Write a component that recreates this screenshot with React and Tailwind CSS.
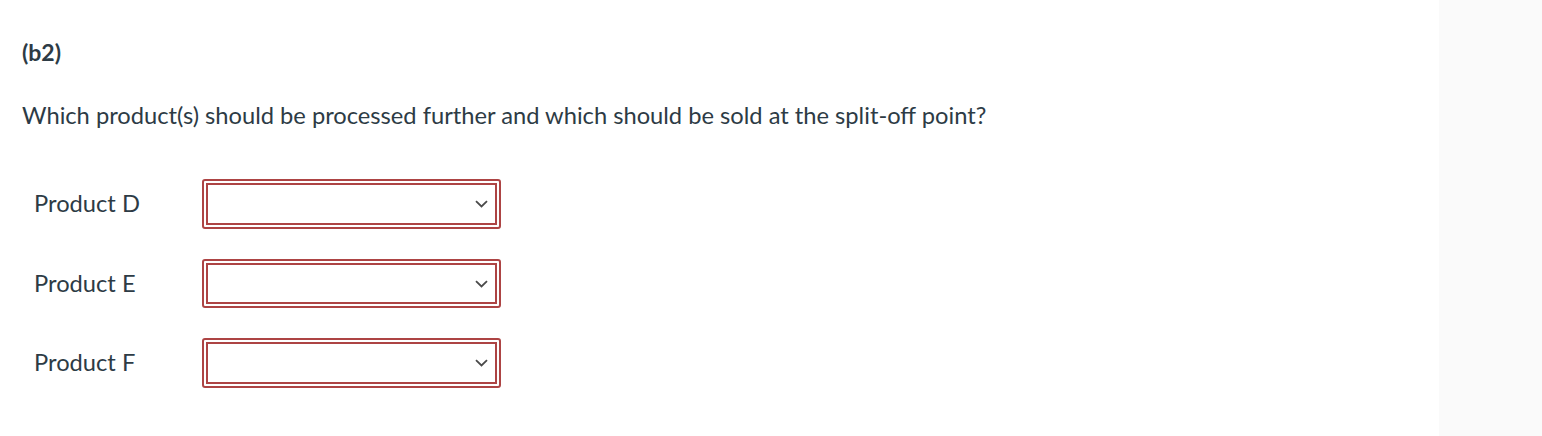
import React from 'react';

const products = ['Product D', 'Product E', 'Product F'];

function Select() {
    return (
        <div className="rounded-[3px] border-2 border-[#ad4444] p-[2px]">
            <div className="relative h-[41.5px] w-[291px] border-2 border-[#ad4444] bg-white">
                <svg
                    className="absolute right-[7px] top-[15px]"
                    width="13"
                    height="8"
                    viewBox="0 0 13 8"
                    fill="none"
                    stroke="#4a4a4a"
                    strokeWidth="1.8"
                >
                    <path d="M1 1.2l5.5 5.3 5.5-5.3" />
                </svg>
            </div>
        </div>
    );
}

export default function App() {
    return (
        <div className="flex h-[436px] w-full bg-white text-[#2d3b45]" style={{ fontFamily: 'Lato, "Noto Sans", sans-serif' }}>
            <div className="flex-1 pl-[22px] pt-[37px]">
                <div className="text-[23px] font-bold leading-[30px]">(b2)</div>
                <p className="mt-[33px] text-[23.7px] leading-[30px]">
                    Which product(s) should be processed further and which should be sold at the split-off point?
                </p>
                <div className="mt-[49px] flex flex-col gap-[30px] pl-[12px]">
                    {products.map((p) => (
                        <div key={p} className="flex items-center">
                            <div className="w-[168px] pt-px text-[23.7px]">{p}</div>
                            <Select />
                        </div>
                    ))}
                </div>
            </div>
            <div className="w-[103px] bg-[#fafafa]" />
        </div>
    );
}
